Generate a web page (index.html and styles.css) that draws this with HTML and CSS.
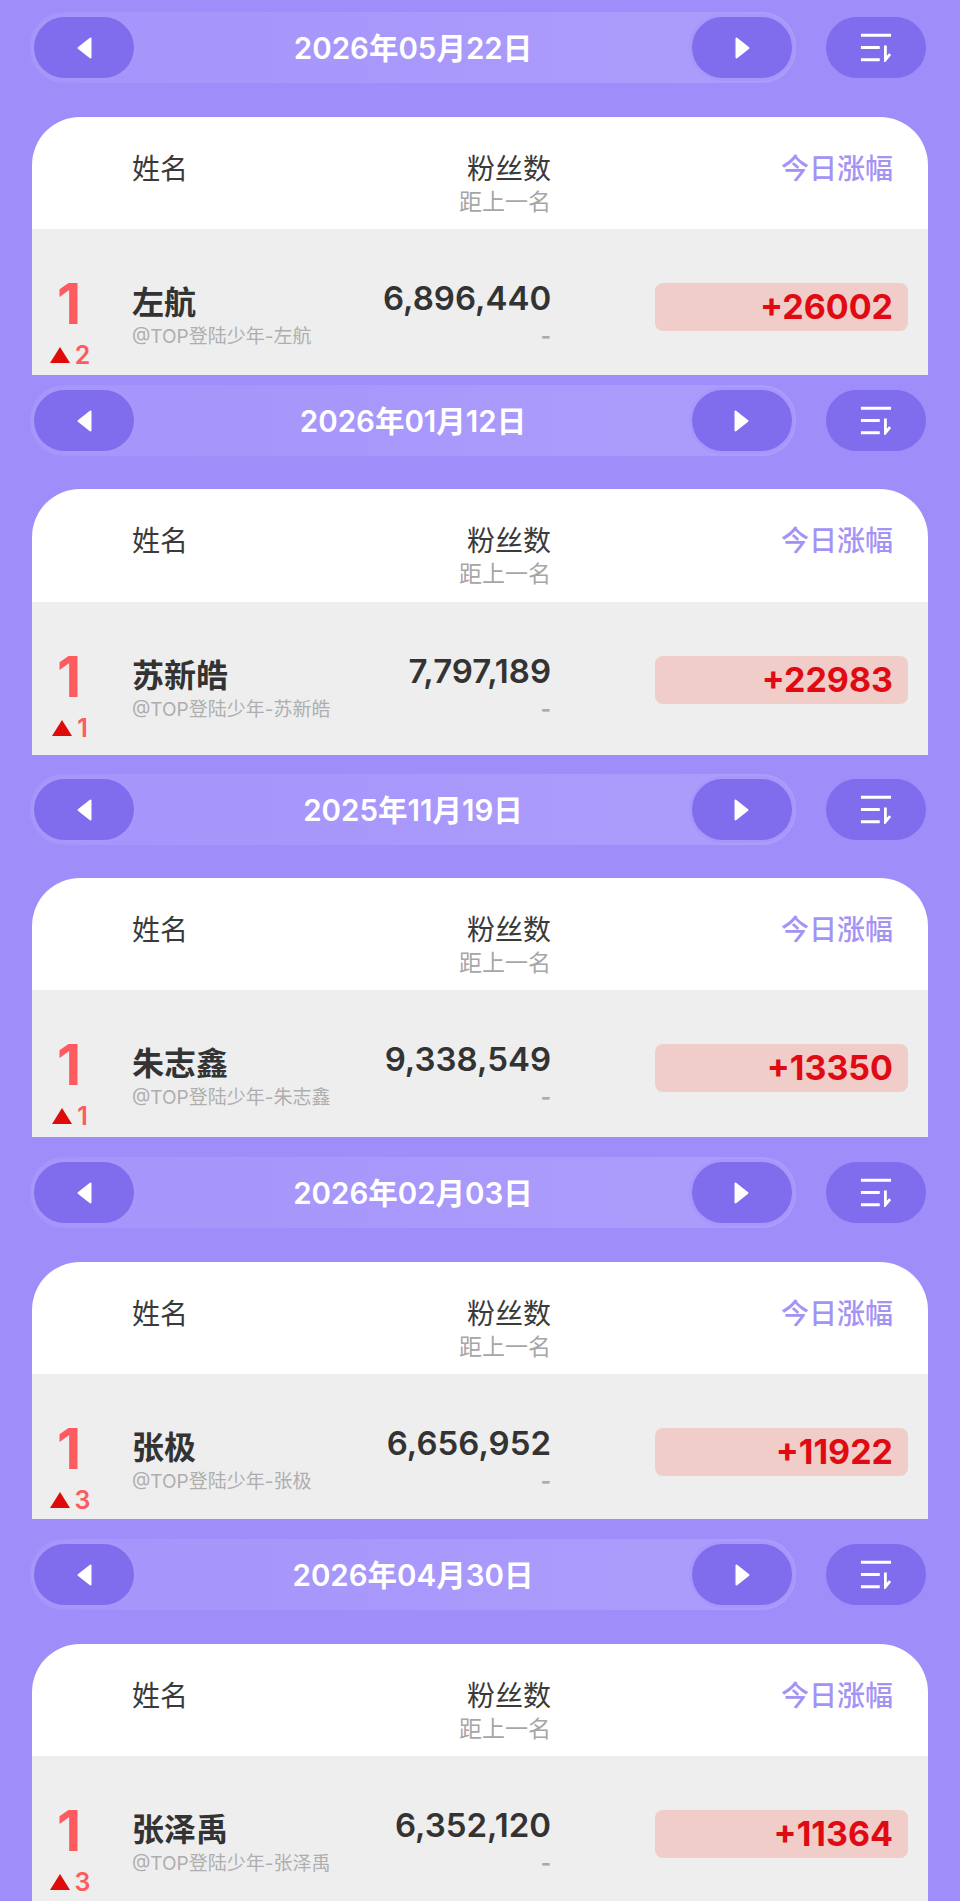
FILE: index.html
```html
<!DOCTYPE html>
<html lang="en">
<head>
  <meta charset="UTF-8" />
  <title>粉丝数排行</title>
  <link rel="stylesheet" href="styles.css">
</head>
<body>
  <svg class="defs" width="0" height="0">
    <symbol id="icon-prev" viewBox="0 0 17 24"><path d="M14.5 2.5 L2.5 12 L14.5 21.5 Z" /></symbol>
    <symbol id="icon-next" viewBox="0 0 17 24"><path d="M2.5 2.5 L14.5 12 L2.5 21.5 Z" /></symbol>
    <symbol id="icon-sort" viewBox="0 0 34 30"><path d="M1 2 H33 M1 15 H21 M1 28 H21 M27 13 V28 L32 22" /></symbol>
  </svg>

  <section class="panel panel-1">
    <div class="toolbar">
      <div class="datebar">
        <button class="btn"><svg class="tri"><use href="#icon-prev" /></svg></button>
        <span class="date">2026年05月22日</span>
        <button class="btn"><svg class="tri"><use href="#icon-next" /></svg></button>
      </div>
      <button class="btn btn-sort"><svg class="sort"><use href="#icon-sort" /></svg></button>
    </div>
    <div class="card">
      <div class="head cols">
        <div class="head-name">姓名</div>
        <div class="head-fans">粉丝数<small>距上一名</small></div>
        <div class="head-rise">今日涨幅</div>
      </div>
      <div class="row cols">
        <div class="rank"><b>1</b><span class="move"><i class="up"></i>2</span></div>
        <div class="who"><strong>左航</strong><small>@TOP登陆少年-左航</small></div>
        <div class="fans">6,896,440<small>-</small></div>
        <div class="rise">+26002</div>
        <div class="mark">微信公众号 特别推送TFPush</div>
      </div>
    </div>
  </section>

  <section class="panel panel-2">
    <div class="toolbar">
      <div class="datebar">
        <button class="btn"><svg class="tri"><use href="#icon-prev" /></svg></button>
        <span class="date">2026年01月12日</span>
        <button class="btn"><svg class="tri"><use href="#icon-next" /></svg></button>
      </div>
      <button class="btn btn-sort"><svg class="sort"><use href="#icon-sort" /></svg></button>
    </div>
    <div class="card">
      <div class="head cols">
        <div class="head-name">姓名</div>
        <div class="head-fans">粉丝数<small>距上一名</small></div>
        <div class="head-rise">今日涨幅</div>
      </div>
      <div class="row cols">
        <div class="rank"><b>1</b><span class="move"><i class="up"></i>1</span></div>
        <div class="who"><strong>苏新皓</strong><small>@TOP登陆少年-苏新皓</small></div>
        <div class="fans">7,797,189<small>-</small></div>
        <div class="rise">+22983</div>
        <div class="mark">微信公众号 特别推送TFPush</div>
      </div>
    </div>
  </section>

  <section class="panel panel-3">
    <div class="toolbar">
      <div class="datebar">
        <button class="btn"><svg class="tri"><use href="#icon-prev" /></svg></button>
        <span class="date">2025年11月19日</span>
        <button class="btn"><svg class="tri"><use href="#icon-next" /></svg></button>
      </div>
      <button class="btn btn-sort"><svg class="sort"><use href="#icon-sort" /></svg></button>
    </div>
    <div class="card">
      <div class="head cols">
        <div class="head-name">姓名</div>
        <div class="head-fans">粉丝数<small>距上一名</small></div>
        <div class="head-rise">今日涨幅</div>
      </div>
      <div class="row cols">
        <div class="rank"><b>1</b><span class="move"><i class="up"></i>1</span></div>
        <div class="who"><strong>朱志鑫</strong><small>@TOP登陆少年-朱志鑫</small></div>
        <div class="fans">9,338,549<small>-</small></div>
        <div class="rise">+13350</div>
        <div class="mark">微信公众号 特别推送TFPush</div>
      </div>
    </div>
  </section>

  <section class="panel panel-4">
    <div class="toolbar">
      <div class="datebar">
        <button class="btn"><svg class="tri"><use href="#icon-prev" /></svg></button>
        <span class="date">2026年02月03日</span>
        <button class="btn"><svg class="tri"><use href="#icon-next" /></svg></button>
      </div>
      <button class="btn btn-sort"><svg class="sort"><use href="#icon-sort" /></svg></button>
    </div>
    <div class="card">
      <div class="head cols">
        <div class="head-name">姓名</div>
        <div class="head-fans">粉丝数<small>距上一名</small></div>
        <div class="head-rise">今日涨幅</div>
      </div>
      <div class="row cols">
        <div class="rank"><b>1</b><span class="move"><i class="up"></i>3</span></div>
        <div class="who"><strong>张极</strong><small>@TOP登陆少年-张极</small></div>
        <div class="fans">6,656,952<small>-</small></div>
        <div class="rise">+11922</div>
        <div class="mark">微信公众号 特别推送TFPush</div>
      </div>
    </div>
  </section>

  <section class="panel panel-5">
    <div class="toolbar">
      <div class="datebar">
        <button class="btn"><svg class="tri"><use href="#icon-prev" /></svg></button>
        <span class="date">2026年04月30日</span>
        <button class="btn"><svg class="tri"><use href="#icon-next" /></svg></button>
      </div>
      <button class="btn btn-sort"><svg class="sort"><use href="#icon-sort" /></svg></button>
    </div>
    <div class="card">
      <div class="head cols">
        <div class="head-name">姓名</div>
        <div class="head-fans">粉丝数<small>距上一名</small></div>
        <div class="head-rise">今日涨幅</div>
      </div>
      <div class="row cols">
        <div class="rank"><b>1</b><span class="move"><i class="up"></i>3</span></div>
        <div class="who"><strong>张泽禹</strong><small>@TOP登陆少年-张泽禹</small></div>
        <div class="fans">6,352,120<small>-</small></div>
        <div class="rise">+11364</div>
        <div class="mark">微信公众号 特别推送TFPush</div>
      </div>
    </div>
  </section>
</body>
</html>
```

FILE: styles.css
```css
* {
  box-sizing: border-box;
}

html, body {
  height: 100%;
}

body {
  margin: 0;
  padding-top: 12px;
  background-color: #9f8ef9;
  font-family: Inter, "Noto Sans CJK SC", sans-serif;
  color: #333;
  overflow: hidden;
}

.defs {
  display: block;
  height: 0;
}

/* the five panels are not quite the same height in the capture */
.panel {
  padding: 0 32px;
}

.panel-1 .row { height: 146px; }
.panel-2 { margin-top: 10px; }
.panel-2 .row { height: 153px; }
.panel-2 .head { height: 113px; }
.panel-2 .toolbar, .panel-3 .toolbar { margin-bottom: 33px; }
.panel-3 { margin-top: 19px; }
.panel-3 .row { height: 147px; }
.panel-4, .panel-5 { margin-top: 20px; }
.panel-4 .row, .panel-5 .row { height: 145px; }

.toolbar {
  display: flex;
  align-items: center;
  justify-content: space-between;
  margin: 0 2px 34px -2px;
}

.datebar {
  display: flex;
  align-items: center;
  justify-content: space-between;
  width: 766px;
  height: 71px;
  padding: 0 4px;
  border-radius: 34px;
  background: linear-gradient(90deg, #a594fa, #ac9dfc);
}

.btn {
  display: flex;
  align-items: center;
  justify-content: center;
  width: 100px;
  height: 61px;
  padding: 0;
  border: 0;
  border-radius: 31px;
  background-color: #7f6ded;
  box-shadow: 0 0 0 3px #a897fa;
}

.btn-sort {
  box-shadow: none;
}

.tri {
  width: 17px;
  height: 24px;
  fill: #fff;
  stroke: #fff;
  stroke-width: 2;
  stroke-linejoin: round;
}

.sort {
  width: 32px;
  height: 29px;
  fill: none;
  stroke: #fff;
  stroke-width: 3;
}

.date {
  margin-top: -3px;
  font-size: 29.5px;
  font-weight: 600;
  color: #fff;
}

.card {
  border-radius: 48px 48px 0 0;
  background-color: #fff;
  overflow: hidden;
}

.cols {
  display: grid;
  grid-template-columns: 100px 251px 168px 357px;
}

.head {
  height: 112px;
  align-items: start;
  padding-top: 32px;
}

.head-name {
  grid-column: 2;
  font-size: 28px;
  line-height: 40px;
  color: #3a3a3a;
}

.head-fans {
  grid-column: 3;
  text-align: right;
  font-size: 28px;
  line-height: 40px;
  color: #3a3a3a;
}

.head-fans small {
  display: block;
  font-size: 23px;
  line-height: 26px;
  color: #a6a6a6;
}

.head-rise {
  grid-column: 4;
  text-align: right;
  padding-right: 15px;
  font-size: 28px;
  line-height: 40px;
  font-weight: 500;
  color: #a493f5;
}

.row {
  position: relative;
  align-items: start;
  background-color: #eee;
  overflow: hidden;
}

.rank {
  display: flex;
  flex-direction: column;
  align-items: center;
  width: 74px;
  padding-top: 44px;
}

.rank b {
  font-size: 56px;
  line-height: 62px;
  font-weight: 700;
  color: #fd5b60;
}

.move {
  display: flex;
  align-items: center;
  gap: 5px;
  margin-top: 5px;
  padding-left: 2px;
  font-size: 25px;
  line-height: 30px;
  font-weight: 600;
  color: #fd5b60;
}

.up {
  width: 0;
  height: 0;
  border-left: 10px solid transparent;
  border-right: 10px solid transparent;
  border-bottom: 16px solid #df0a0a;
}

.who {
  padding-top: 52px;
}

.who strong {
  display: block;
  font-size: 32px;
  line-height: 44px;
  font-weight: 700;
  color: #333;
}

.who small {
  display: block;
  margin-top: -1px;
  font-size: 19px;
  line-height: 26px;
  color: #aeaeae;
}

.fans {
  padding-top: 47px;
  text-align: right;
  font-size: 33px;
  line-height: 44px;
  font-weight: 600;
  color: #333;
}

.fans small {
  display: block;
  margin-top: 1px;
  font-size: 22px;
  line-height: 30px;
  font-weight: 700;
  color: #aaa;
}

.rise {
  position: relative;
  z-index: 1;
  justify-self: end;
  width: 253px;
  height: 48px;
  margin-top: 54px;
  padding-right: 15px;
  border-radius: 8px;
  background-color: #f1cdc9;
  text-align: right;
  font-size: 34px;
  line-height: 48px;
  font-weight: 700;
  color: #e00b12;
}

/* faint channel watermark lying over the row */
.mark {
  position: absolute;
  left: 213px;
  top: 66px;
  transform: rotate(-9.5deg);
  white-space: nowrap;
  font-size: 38px;
  line-height: 30px;
  color: rgba(0, 0, 0, 0.016);
  pointer-events: none;
}
```
